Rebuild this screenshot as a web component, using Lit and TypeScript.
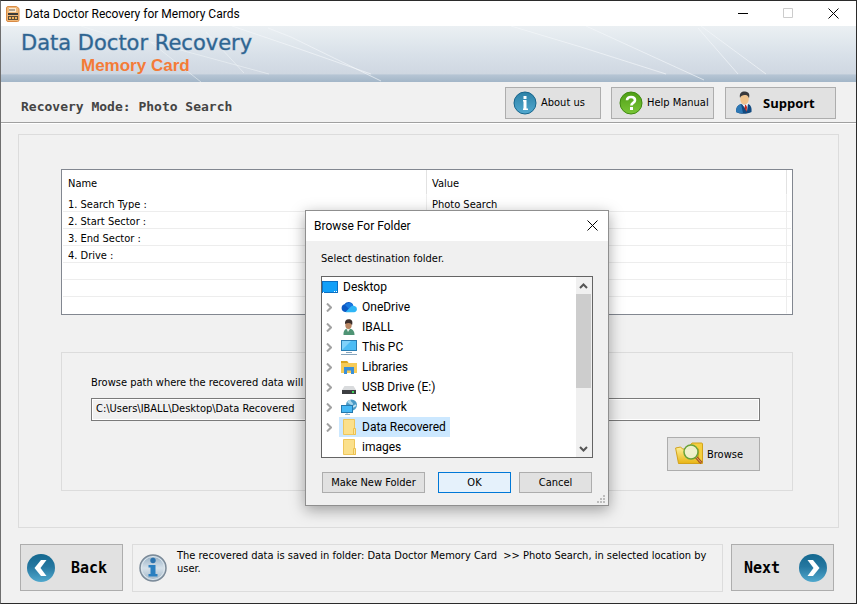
import { LitElement, html, css, svg, nothing } from "lit";
import { customElement, property } from "lit/decorators.js";

const appIcon = html`<svg width="14" height="16" viewBox="0 0 14 16" aria-hidden="true">
  <path d="M2 .5h8.500l2.500 2V14a1.500 1.500 0 0 1-1.500 1.500H2A1.500 1.500 0 0 1 .5 14V2A1.500 1.500 0 0 1 2 .5z" fill="#f0b878" stroke="#d98b45"/>
  <rect x="3" y="2" width="7" height="4" fill="#fbe9d2"/>
  <path d="M4 3v2M6 3v2M8 3v2" stroke="#6a5a48"/>
  <rect x="2" y="7" width="10" height="2" fill="#3c3a38"/>
  <rect x="2" y="10" width="10" height="4" fill="#5a4a38"/>
  <path d="M3 12h2M6 12h2M9 12h2" stroke="#f2b25a" stroke-width="2"/>
</svg>`;

const infoDisc = html`<svg width="24" height="24" viewBox="0 0 24 24" aria-hidden="true">
  <defs><linearGradient id="g" x1="0" y1="0" x2="0" y2="1"><stop offset="0" stop-color="#2c81a6"/><stop offset="1" stop-color="#52a9d0"/></linearGradient></defs>
  <circle cx="12" cy="12" r="11" fill="url(#g)" stroke="#17658c"/>
  <rect x="10.500" y="5" width="3" height="3" fill="#fff"/>
  <path d="M10 9h3.500v8.500H15V19h-5v-1.500h.5v-7H10z" fill="#fff"/>
</svg>`;

const helpDisc = html`<svg width="24" height="24" viewBox="0 0 24 24" aria-hidden="true">
  <defs><linearGradient id="g" x1="0" y1="0" x2="0" y2="1"><stop offset="0" stop-color="#4e9d16"/><stop offset="1" stop-color="#7ac637"/></linearGradient></defs>
  <circle cx="12" cy="12" r="11" fill="url(#g)" stroke="#3f8a10"/>
  <path d="M8 9.300C8 7 9.700 6 12 6s4 1.200 4 3.200c0 2.600-3.600 2.700-3.600 5.200" fill="none" stroke="#fff" stroke-width="2.600"/>
  <rect x="11" y="16" width="3" height="3" fill="#fff"/>
</svg>`;

const supportMan = html`<svg width="18" height="24" viewBox="0 0 18 24" aria-hidden="true">
  <path d="M1 21c0-5 2-7 5-8l3 1 4-1c3 1 4 4 3.500 8-4 2.300-11 2.600-15.500 0z" fill="#124a80"/>
  <path d="M1 21c0-5 2-7 5-8l2 9c-3 .3-5 0-7-1z" fill="#2d78b5"/>
  <path d="M7 13l3 1 3-2-1 8z" fill="#fff"/>
  <path d="M10 14l1 0 1 2-.5 5-2-4z" fill="#c3281c"/>
  <ellipse cx="9.500" cy="8" rx="4.300" ry="5.500" fill="#f0c48e"/>
  <path d="M5 7C4 2 7 .3 10 .6c4 .3 5 3 4 6.600-.6-2-1.500-3-3.500-3.200C8 3.800 6 4.500 5 7z" fill="#39393d"/>
</svg>`;

const arrowDisc = (dir: "left" | "right") => html`<svg width="28" height="28" viewBox="0 0 28 28" aria-hidden="true">
  <defs><linearGradient id="g" x1="0" y1="0" x2="0" y2="1"><stop offset="0" stop-color="#14688f"/><stop offset=".45" stop-color="#2577a0"/><stop offset="1" stop-color="#50a8cd"/></linearGradient></defs>
  <circle cx="14" cy="14" r="14" fill="url(#g)"/>
  <path d=${dir === "left" ? "M14 6h5.500l-6 8 6 8H14l-6.500-8z" : "M14 6H8.500l6 8-6 8H14l6.500-8z"} fill="#fff"/>
</svg>`;

const infoBadge = html`<svg width="28" height="28" viewBox="0 0 28 28" aria-hidden="true">
  <defs><linearGradient id="g" x1="0" y1="0" x2="0" y2="1"><stop offset="0" stop-color="#8faac0"/><stop offset=".5" stop-color="#d6e1ea"/><stop offset="1" stop-color="#9fb4c5"/></linearGradient></defs>
  <circle cx="14" cy="14" r="13" fill="url(#g)" stroke="#7b8a98" stroke-width="1.500"/>
  <circle cx="14" cy="14" r="11.500" fill="none" stroke="#dfe8ee"/>
  <circle cx="14" cy="6.500" r="2.700" fill="#2a72ae"/>
  <path d="M9.500 11h7v9h2v2.500h-9V20h2v-6.500h-2z" fill="#2a7fc0"/>
</svg>`;

const browseIcon = html`<svg width="28" height="24" viewBox="0 0 28 24" aria-hidden="true">
  <defs><linearGradient id="g" x1="0" y1="0" x2="0" y2="1"><stop offset="0" stop-color="#fdf09a"/><stop offset="1" stop-color="#e9b514"/></linearGradient></defs>
  <path d="M15 3.500L17 1h9.500c.6 0 1 .4 1 1v19.500H4z" fill="#f5cf3e" stroke="#d2a21c"/>
  <path d="M.6 6l5-1 2 2h16v14.500H3.500z" fill="url(#g)" stroke="#d2a21c"/>
  <path d="M21 15l5.500 6" stroke="#a4541f" stroke-width="3"/>
  <path d="M21 15l5 5.500" stroke="#e9a76b"/>
  <circle cx="16" cy="10" r="7" fill="#eef3d8" fill-opacity=".9" stroke="#69a33a" stroke-width="1.500"/>
</svg>`;

const treeIcons: Record<string, unknown> = {
  desktop: svg`<rect x=".5" y="2.500" width="15" height="11" fill="#12a0f8" stroke="#0b6fc2"/><path d="M1 13.500h1M12 12.500h1M14 12.500h1" stroke="#fff"/>`,
  cloud: svg`<path d="M4 13a4 4 0 0 1-.5-7.800A5 5 0 0 1 12 5.500l-6 7.500z" fill="#0c59c4"/><path d="M5 5a5 5 0 0 1 7.500 1.500L8 10 4 6z" fill="#1a7ae0"/><path d="M4.500 13L10 7.500A4 4 0 0 1 13.500 7 3.200 3.200 0 0 1 13 13.300H5z" fill="#2fb6f6"/>`,
  user: svg`<path d="M2.500 16c-.3-4 1.500-6.500 4.500-6.500 4 0 6.500 2 6.500 6.500z" fill="#4f9474"/><path d="M5 9l4 1-2 3z" fill="#e9eee8"/><ellipse cx="7.500" cy="6" rx="3.200" ry="4" fill="#b98662"/><path d="M4 5c-.4-3 1.200-5 4-4.800 3 0 4 2.300 3 6C10 3.500 7 3.500 4 5z" fill="#3b2e2a"/>`,
  pc: svg`<rect x=".5" y="1.500" width="15" height="10" fill="#4dbcf4" stroke="#2a7db2"/><path d="M1 11L10 2H1z" fill="#7fd2fa"/><path d="M5 13.500h6M0 15.500h16" stroke="#86a4bd"/>`,
  library: svg`<path d="M0 2h6l1.500 2H16v10H0z" fill="#f7cb57"/><path d="M0 2h6l1.500 2H0z" fill="#dba520"/><path d="M3 15V8h10v7h-3v-3.500H6V15z" fill="#3a8fd8"/>`,
  drive: svg`<path d="M3.500 7h9l2.500 4H1z" fill="#d9dbdd"/><path d="M1 11h14v4H1z" fill="#3c3e41"/><rect x="11" y="12" width="2" height="2" fill="#40d65a"/>`,
  network: svg`<circle cx="10.500" cy="6" r="5.500" fill="#4a9ac6"/><path d="M6 3c2-2.500 4-2.500 4-1s2 1 2 3-3 1-6-2z" fill="#a9d6ea"/><path d="M12 8l3-2" stroke="#c4e3ef" stroke-width="2"/><rect x=".5" y="6.500" width="11" height="7" fill="#45b8f5" stroke="#2478ad"/><path d="M6 14v2M4 15.500h5" stroke="#8fb4cf"/>`,
  folder: svg`<path d="M2.500.5h11v10l1 5h-12z" fill="#fbe08b" stroke="#efc65b"/><path d="M12.500 9.500h2v6h-2z" fill="#fbe69e" stroke="#ecc050"/>`,
};

@customElement("tool-button")
export class ToolButton extends LitElement {
  @property() label = "";
  @property({ attribute: false }) icon: unknown = nothing;
  @property() kind = "plain";
  @property({ type: Boolean }) trailing = false;

  static styles = css`
    :host { display: flex; }
    button {
      flex: 1; display: flex; align-items: center; gap: 4px; box-sizing: border-box; padding: 0 0 0 7px;
      border: 1px solid #adadad; background: #e1e1e1; color: #000; white-space: nowrap;
      font: 11px/14px "DejaVu Sans Condensed", "DejaVu Sans", sans-serif;
    }
    button.strong { gap: 10px; padding-left: 9px; font: bold 13px/16px "Open Sans", sans-serif; }
    button.nav { gap: 16px; padding-left: 6px; font: bold 15px/18px "DejaVu Sans Mono", monospace; }
    button.trailing { flex-direction: row-reverse; justify-content: space-between; padding: 0 6px 0 12px; }
    svg { display: block; flex: none; }
    span { padding-top: 1px; }
  `;

  render() {
    return html`<button type="button" class="${this.kind} ${this.trailing ? "trailing" : ""}">${this.icon}<span>${this.label}</span></button>`;
  }
}

@customElement("folder-dialog")
export class FolderDialog extends LitElement {
  private nodes = [
    { name: "OneDrive", icon: "cloud", branch: true },
    { name: "IBALL", icon: "user", branch: true },
    { name: "This PC", icon: "pc", branch: true },
    { name: "Libraries", icon: "library", branch: true },
    { name: "USB Drive (E:)", icon: "drive", branch: true },
    { name: "Network", icon: "network", branch: true },
    { name: "Data Recovered", icon: "folder", branch: true, selected: true },
    { name: "images", icon: "folder", branch: false },
  ];

  static styles = css`
    :host {
      display: block; box-sizing: border-box; width: 304px; border: 1px solid #8f8f8f; background: #f0f0f0;
      box-shadow: 0 4px 14px rgba(0, 0, 0, 0.35); color: #000;
      font: 12px/20px Roboto, "Open Sans", sans-serif;
    }
    * { box-sizing: border-box; }
    svg { display: block; flex: none; }
    header { display: flex; align-items: center; justify-content: space-between; height: 30px; padding: 0 10px 1px 8px; background: #fff; }
    h2 { margin: 0; font: inherit; }
    .close, .toggle { display: flex; align-items: center; padding: 0; border: 0; background: none; }
    .body { position: relative; padding: 8px 15px 12px; }
    p { margin: 0 0 7px; font: 11px/20px "DejaVu Sans Condensed", "DejaVu Sans", sans-serif; }
    .tree { display: flex; border: 1px solid #646464; background: #fff; }
    ul { flex: 1; min-width: 0; margin: 0; padding: 0; list-style: none; }
    li { display: flex; height: 20px; }
    .toggle { width: 17px; padding-left: 4px; }
    .item { display: flex; align-items: center; gap: 5px; padding: 0 4px 0 2px; }
    .root { padding-left: 0; }
    .leaf { margin-left: 17px; }
    .selected { background: #cce8ff; }
    .scroll { display: flex; flex-direction: column; width: 16px; background: #f0f0f0; }
    .thumb { height: 94px; margin: 0 1px auto 0; background: #cdcdcd; }
    .actions { display: flex; margin-top: 14px; padding: 0 1px; }
    .actions button {
      height: 21px; width: 73px; padding: 0; border: 1px solid #adadad; background: #e1e1e1; color: #000;
      font: 11px/14px "DejaVu Sans Condensed", "DejaVu Sans", sans-serif;
    }
    .actions .make { width: 103px; margin-right: auto; }
    .actions .ok { margin-right: 8px; border-color: #0078d7; background: #e5f1fb; }
    .grip { position: absolute; right: 3px; bottom: 2px; }
  `;

  private icon(name: string) {
    return html`<svg width="16" height="16" viewBox="0 0 16 16" aria-hidden="true">${treeIcons[name]}</svg>`;
  }

  render() {
    return html`
      <header>
        <h2>Browse For Folder</h2>
        <button class="close" type="button" aria-label="Close"><svg width="11" height="11" viewBox="0 0 11 11"><path d="M.5.5l10 10M10.500.5l-10 10" stroke="#000"/></svg></button>
      </header>
      <div class="body">
        <p>Select destination folder.</p>
        <div class="tree">
          <ul>
            <li><span class="item root">${this.icon("desktop")}<span>Desktop</span></span></li>
            ${this.nodes.map((n) => html`<li>
              ${n.branch ? html`<button class="toggle" type="button" aria-label="Expand ${n.name}"><svg width="6" height="9" viewBox="0 0 6 9"><path d="M1 .5l4 4-4 4" fill="none" stroke="#a2a2a2" stroke-width="2"/></svg></button>` : nothing}
              <span class="item ${n.branch ? "" : "leaf"} ${n.selected ? "selected" : ""}">${this.icon(n.icon)}<span>${n.name}</span></span>
            </li>`)}
          </ul>
          <div class="scroll" aria-hidden="true">
            <svg width="15" height="17" viewBox="0 0 15 17"><path d="M4 11l3.500-3.500L11 11" fill="none" stroke="#555" stroke-width="2"/></svg>
            <div class="thumb"></div>
            <svg width="15" height="17" viewBox="0 0 15 17"><path d="M4 7l3.500 3.500L11 7" fill="none" stroke="#555" stroke-width="2"/></svg>
          </div>
        </div>
        <div class="actions">
          <button class="make" type="button">Make New Folder</button>
          <button class="ok" type="button">OK</button>
          <button type="button">Cancel</button>
        </div>
        <svg class="grip" width="8" height="8" viewBox="0 0 8 8" aria-hidden="true"><path d="M6 0h2v2H6zM3 3h2v2H3zM6 3h2v2H6zM0 6h2v2H0zM3 6h2v2H3zM6 6h2v2H6z" fill="#bdbdbd"/></svg>
      </div>
    `;
  }
}

@customElement("app-root")
export class AppRoot extends LitElement {
  private rows = [
    ["1. Search Type :", "Photo Search"],
    ["2. Start Sector :", ""],
    ["3. End Sector :", ""],
    ["4. Drive :", ""],
    ["", ""],
    ["", ""],
    ["", ""],
  ];

  static styles = css`
    :host {
      display: flex; flex-direction: column; position: relative; box-sizing: border-box; min-height: 100vh;
      border: 1px solid #2b2b2b; border-left-color: #6e6e6e; background: #f1f1f1; color: #000;
      font: 11px/13px "DejaVu Sans Condensed", "DejaVu Sans", sans-serif;
    }
    * { box-sizing: border-box; }
    svg { display: block; }
    .titlebar { display: flex; align-items: center; gap: 5px; height: 25px; padding: 0 17px 0 5px; background: #fff; font: 12px/16px Roboto, "Open Sans", sans-serif; }
    .caption { flex: 1; }
    .wins { display: flex; gap: 34px; }
    .wins button { padding: 0; border: 0; background: none; }
    .banner { position: relative; height: 56px; background: linear-gradient(#ebf0f3, #d9e1e9 50%, #cfd7e1 86%, #b6c5d4 87%, #a3b6c8); }
    .rays { position: absolute; inset: 0; width: 100%; height: 100%; }
    .brand { position: relative; display: inline-flex; flex-direction: column; padding: 4px 0 0 20px; }
    h1 { margin: 0; color: #2f6592; font: 21px/27px "DejaVu Sans", sans-serif; -webkit-text-stroke: 1px rgba(47, 101, 146, 0.35); }
    .brand span { padding-left: 60px; color: #f47b37; font: bold 17px/18px "Liberation Sans", sans-serif; }
    .toolbar { display: flex; align-items: center; gap: 10px; height: 42px; padding: 0 20px; border-bottom: 1px solid #fff; box-shadow: inset 0 -1px #a0a0a0; }
    .mode { flex: 1; margin: 0; padding-top: 8px; color: #444; font: bold 13px/16px "DejaVu Sans Mono", monospace; }
    .toolbar tool-button { height: 32px; }
    .about { width: 96px; }
    .help { width: 103px; }
    .support { width: 111px; margin-left: 1px; }
    main { flex: 1; margin: 10px 17px 16px; padding: 34px 45px 36px 42px; border: 1px solid #dcdcdc; }
    .list { padding: 0 1px; border: 1px solid #828790; background: #fff; }
    table { width: 100%; border-collapse: separate; border-spacing: 0; table-layout: fixed; }
    th, td { height: 17px; padding: 2px 5px 0; border-right: 1px solid #ededed; border-bottom: 1px solid #ededed; text-align: left; font-weight: normal; vertical-align: middle; }
    th { height: 25px; border-bottom-color: #fff; border-right-color: #e2e2e2; }
    th:first-child { width: 50%; }
    .edge { width: 4px; padding: 0; border-right: 0; }
    thead .edge { border-bottom-color: #fff; }
    tbody tr:last-child td { border-bottom-color: #fff; }
    .path { display: flex; flex-direction: column; margin-top: 37px; padding: 23px 32px 19px 29px; border: 1px solid #dcdcdc; }
    .path input { height: 23px; margin: 9px 0 16px; padding: 0 4px 3px; border: 1px solid #7a7a7a; box-shadow: inset 0 0 0 1px #fff; border-radius: 0; background: #f0f0f0; color: #000; font: inherit; }
    .path tool-button { align-self: flex-end; width: 93px; height: 34px; }
    footer { display: flex; gap: 8px; padding: 0 22px 11px 19px; }
    footer tool-button { width: 103px; height: 47px; }
    .note { flex: 1; display: flex; gap: 10px; height: 48px; margin-left: 1px; padding: 4px 8px 0 6px; border: 1px solid #dcdcdc; }
    .note svg { flex: none; margin-top: 5px; }
    .note p { margin: 0; white-space: pre-wrap; }
    folder-dialog { position: absolute; left: 304px; top: 209px; }
  `;

  render() {
    return html`
      <div class="titlebar">
        ${appIcon}
        <span class="caption">Data Doctor Recovery for Memory Cards</span>
        <div class="wins">
          <button type="button" aria-label="Minimize"><svg width="11" height="11" viewBox="0 0 11 11"><path d="M0 5.500h10" stroke="#000"/></svg></button>
          <button type="button" aria-label="Maximize" disabled><svg width="11" height="11" viewBox="0 0 11 11"><path d="M.5.5h9v9h-9z" fill="none" stroke="#ccc"/></svg></button>
          <button type="button" aria-label="Close"><svg width="11" height="11" viewBox="0 0 11 11"><path d="M.5.5l10 10M10.500.5l-10 10" stroke="#000"/></svg></button>
        </div>
      </div>
      <div class="banner">
        <svg class="rays" viewBox="0 0 855 56" preserveAspectRatio="none" aria-hidden="true">
          <g fill="none" stroke="#f4f8fa" stroke-opacity=".65">
            <path d="M80 0L112 10M142 10L200 56M205 6L243 47M150 16L268 48" stroke-opacity=".5"/>
            <path d="M267 2L290 11 380 55M231 0L290 20 370 48M510 0L580 21 665 48M585 0L703 54M697 2L737 48M700 0L765 48"/>
          </g>
        </svg>
        <div class="brand"><h1>Data Doctor Recovery</h1><span>Memory Card</span></div>
      </div>
      <div class="toolbar">
        <p class="mode">Recovery Mode: Photo Search</p>
        <tool-button class="about" label="About us" .icon=${infoDisc}></tool-button>
        <tool-button class="help" label="Help Manual" .icon=${helpDisc}></tool-button>
        <tool-button class="support" kind="strong" label="Support" .icon=${supportMan}></tool-button>
      </div>
      <main>
        <div class="list">
          <table>
            <thead><tr><th scope="col">Name</th><th scope="col">Value</th><td class="edge"></td></tr></thead>
            <tbody>${this.rows.map(([name, value]) => html`<tr><td>${name}</td><td>${value}</td><td class="edge"></td></tr>`)}</tbody>
          </table>
        </div>
        <section class="path">
          <label for="target">Browse path where the recovered data will be saved.</label>
          <input id="target" type="text" readonly .value=${"C:\\Users\\IBALL\\Desktop\\Data Recovered"} />
          <tool-button label="Browse" .icon=${browseIcon}></tool-button>
        </section>
      </main>
      <footer>
        <tool-button kind="nav" label="Back" .icon=${arrowDisc("left")}></tool-button>
        <div class="note">${infoBadge}<p>The recovered data is saved in folder: Data Doctor Memory Card  &gt;&gt; Photo Search, in selected location by user.</p></div>
        <tool-button kind="nav" trailing label="Next" .icon=${arrowDisc("right")}></tool-button>
      </footer>
      <folder-dialog role="dialog" aria-label="Browse For Folder"></folder-dialog>
    `;
  }
}
